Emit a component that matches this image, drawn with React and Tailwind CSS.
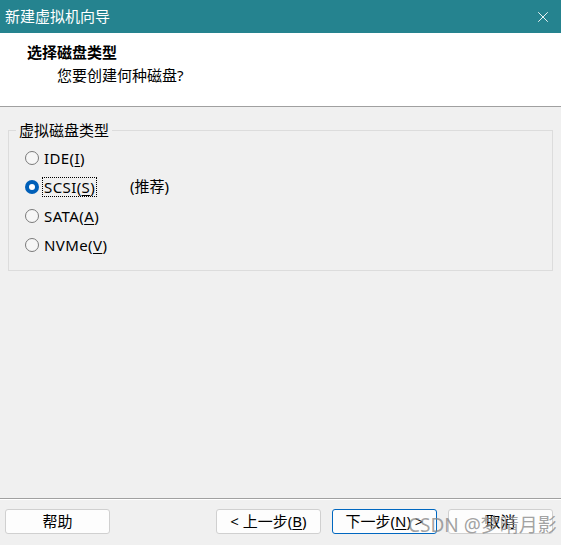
import { X } from "lucide-react";

const font = "font-['Noto_Sans','Noto_Sans_CJK_SC',sans-serif]";

function Radio({ checked, label, hotkey, extra, focus }) {
  return (
    <div className="flex items-center h-[29px]">
      {checked ? (
        <span className="w-[14px] h-[14px] rounded-full bg-[#005fb8] flex items-center justify-center">
          <span className="w-[6px] h-[6px] rounded-full bg-white" />
        </span>
      ) : (
        <span className="w-[14px] h-[14px] rounded-full border border-[#7a7a7a] bg-[#f6f6f6]" />
      )}
      <span
        className={
          "ml-[4px] leading-[18px] px-[1px] tracking-[0.4px] " +
          (focus ? "outline outline-1 outline-dotted outline-black" : "")
        }
      >
        {label}(<span className="underline underline-offset-2">{hotkey}</span>)
      </span>
      {extra && <span className="ml-[34px]">{extra}</span>}
    </div>
  );
}

function Btn({ children, primary, className = "" }) {
  return (
    <button
      className={
        "h-[25px] w-[105px] rounded-[3px] bg-[#fdfdfd] text-[15px] text-black flex items-center justify-center " +
        (primary ? "border border-[#0067c0] " : "border border-[#d0d0d0] ") +
        className
      }
    >
      {children}
    </button>
  );
}

export default function App() {
  return (
    <div className={"w-[561px] h-[545px] bg-[#f0f0f0] flex flex-col relative text-[15px] text-black " + font}>
      {/* 标题栏 */}
      <div className="h-[33px] bg-[#25838f] flex items-center justify-between pl-[5px] pr-[9px]">
        <span className="text-white text-[15px]">新建虚拟机向导</span>
        <X className="w-[18px] h-[18px] text-white" strokeWidth={1.2} />
      </div>

      {/* 头部 */}
      <div className="h-[74px] bg-white border-b border-[#a0a0a0] pt-[8px]">
        <div className="pl-[27px] font-bold leading-[22px]">选择磁盘类型</div>
        <div className="pl-[57px] leading-[22px] mt-[1px]">您要创建何种磁盘?</div>
      </div>

      {/* 内容 */}
      <div className="flex-1 px-[8px] pt-[14px]">
        <fieldset className="border border-[#dcdcdc] h-[150px]">
          <legend className="ml-[7px] px-[3px] leading-[18px]">虚拟磁盘类型</legend>
          <div className="pl-[16px] pt-[4px]">
            <Radio label="IDE" hotkey="I" />
            <Radio checked focus label="SCSI" hotkey="S" extra="(推荐)" />
            <Radio label="SATA" hotkey="A" />
            <Radio label="NVMe" hotkey="V" />
          </div>
        </fieldset>
      </div>

      {/* 底部 */}
      <div className="h-[47px] border-t border-[#a0a0a0] shadow-[inset_0_1px_0_#ffffff] flex items-center px-[5px] pb-[1px]">
        <Btn>帮助</Btn>
        <div className="flex-1" />
        <Btn>
          &lt; 上一步(<span className="underline underline-offset-2">B</span>)
        </Btn>
        <Btn primary className="ml-[11px]">
          下一步(<span className="underline underline-offset-2">N</span>) &gt;
        </Btn>
        <Btn className="ml-[11px] mr-[3px]">取消</Btn>
      </div>

      <div className="absolute left-[408px] top-[511px] text-[19px] text-[#8a8a8a]/80 pointer-events-none">
        CSDN @梦晴月影
      </div>
    </div>
  );
}
